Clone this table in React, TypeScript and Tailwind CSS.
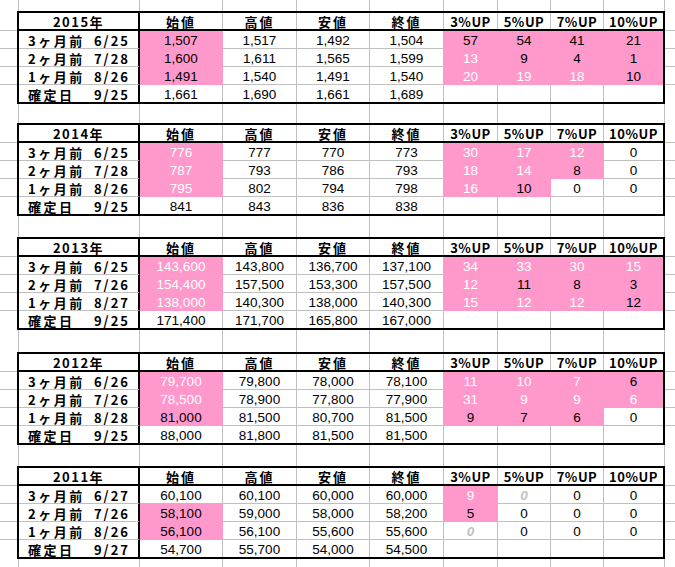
type Tone = '' | 'pb' | 'pw' | 'g' | 'x'
type Cell = { v: string; t: Tone }
type Row = { label: string; date: string; cells: Cell[] }
type Table = { year: string; rows: Row[] }

// "1,507:pb" => pink bg / black text, ":pw" pink bg / white text, ":g" grey italic zero, "-" empty
const parse = (s: string): Cell[] =>
  s.split(' ').map((p) => {
    if (p === '-') return { v: '', t: 'x' }
    const [v, t] = p.split(':')
    return { v, t: (t ?? '') as Tone }
  })

const tables: Table[] = [
  {
    year: '2015年',
    rows: [
      { label: '3ヶ月前', date: '6/25', cells: parse('1,507:pb 1,517 1,492 1,504 57:pb 54:pb 41:pb 21:pb') },
      { label: '2ヶ月前', date: '7/28', cells: parse('1,600:pb 1,611 1,565 1,599 13:pw 9:pb 4:pb 1:pb') },
      { label: '1ヶ月前', date: '8/26', cells: parse('1,491:pb 1,540 1,491 1,540 20:pw 19:pw 18:pw 10:pb') },
      { label: '確定日', date: '9/25', cells: parse('1,661 1,690 1,661 1,689 - - - -') },
    ],
  },
  {
    year: '2014年',
    rows: [
      { label: '3ヶ月前', date: '6/25', cells: parse('776:pw 777 770 773 30:pw 17:pw 12:pw 0') },
      { label: '2ヶ月前', date: '7/28', cells: parse('787:pw 793 786 793 18:pw 14:pw 8:pb 0') },
      { label: '1ヶ月前', date: '8/26', cells: parse('795:pw 802 794 798 16:pw 10:pb 0 0') },
      { label: '確定日', date: '9/25', cells: parse('841 843 836 838 - - - -') },
    ],
  },
  {
    year: '2013年',
    rows: [
      { label: '3ヶ月前', date: '6/25', cells: parse('143,600:pw 143,800 136,700 137,100 34:pw 33:pw 30:pw 15:pw') },
      { label: '2ヶ月前', date: '7/26', cells: parse('154,400:pw 157,500 153,300 157,500 12:pw 11:pb 8:pb 3:pb') },
      { label: '1ヶ月前', date: '8/27', cells: parse('138,000:pw 140,300 138,000 140,300 15:pw 12:pw 12:pw 12:pb') },
      { label: '確定日', date: '9/25', cells: parse('171,400 171,700 165,800 167,000 - - - -') },
    ],
  },
  {
    year: '2012年',
    rows: [
      { label: '3ヶ月前', date: '6/26', cells: parse('79,700:pw 79,800 78,000 78,100 11:pw 10:pw 7:pw 6:pb') },
      { label: '2ヶ月前', date: '7/26', cells: parse('78,500:pw 78,900 77,800 77,900 31:pw 9:pw 9:pw 6:pw') },
      { label: '1ヶ月前', date: '8/28', cells: parse('81,000:pb 81,500 80,700 81,500 9:pb 7:pb 6:pb 0') },
      { label: '確定日', date: '9/25', cells: parse('88,000 81,800 81,500 81,500 - - - -') },
    ],
  },
  {
    year: '2011年',
    rows: [
      { label: '3ヶ月前', date: '6/27', cells: parse('60,100 60,100 60,000 60,000 9:pw 0:g 0 0') },
      { label: '2ヶ月前', date: '7/26', cells: parse('58,100:pb 59,000 58,000 58,200 5:pb 0 0 0') },
      { label: '1ヶ月前', date: '8/26', cells: parse('56,100:pb 56,100 55,600 55,600 0:g 0 0 0') },
      { label: '確定日', date: '9/27', cells: parse('54,700 55,700 54,000 54,500 - - - -') },
    ],
  },
]

const HEADS = ['始値', '高値', '安値', '終値', '3%UP', '5%UP', '7%UP', '10%UP']
const COLS = ['w-[83px]', 'w-[74px]', 'w-[73px]', 'w-[74px]', 'w-[54px]', 'w-[53px]', 'w-[53px]', 'w-[59px]']
const ROW_H = ['h-[18px]', 'h-[18px]', 'h-[18px]', 'h-[17px]']
const GRID = ['w-[19px]', 'w-[121px]', 'w-[83px]', 'w-[74px]', 'w-[73px]', 'w-[74px]', 'w-[54px]', 'w-[53px]', 'w-[53px]', 'w-[61px]']
const GAPS = ['h-[19px]', 'h-[21px]', 'h-[22px]', 'h-[21px]']

const jp = 'font-["Noto_Sans_CJK_JP",sans-serif] font-bold leading-none text-black'
const num = 'font-["Liberation_Sans",Arial,sans-serif] text-[13.5px] leading-none'

const isPink = (c?: Cell) => !!c && (c.t === 'pb' || c.t === 'pw')

const Spacer = ({ h }: { h: string }) => (
  <div className={`flex ${h}`}>
    {GRID.map((w, i) => (
      <div key={i} className={`${w} shrink-0 border-r border-r-[#c0c0c0]`} />
    ))}
  </div>
)

const Margin = ({ w }: { w: string }) => (
  <div className={`${w} shrink-0 flex flex-col`}>
    <div className="h-[20px] border-b border-b-[#c0c0c0]" />
    <div className="h-[18px] border-b border-b-[#c0c0c0]" />
    <div className="h-[18px] border-b border-b-[#c0c0c0]" />
    <div className="h-[18px] border-b border-b-[#c0c0c0]" />
    <div className="flex-1" />
  </div>
)

const SheetTable = ({ table }: { table: Table }) => (
  <div className="flex h-[93px]">
    <Margin w="w-[17px]" />
    <div className="w-[648px] shrink-0 border-2 border-black flex flex-col">
      {/* header */}
      <div className="flex h-[18px] border-b-2 border-b-black">
        <div className={`w-[121px] shrink-0 border-r-2 border-r-black flex items-center justify-center text-[13px] tracking-[1.5px] ${jp}`}>
          {table.year}
        </div>
        {HEADS.map((h, i) => (
          <div
            key={h}
            className={`${COLS[i]} shrink-0 flex items-center justify-center ${i < 4 ? 'text-[13px] tracking-[2px]' : 'text-[13px] tracking-[0.5px]'} ${jp} ${
              i < 7 ? 'border-r border-r-[#c0c0c0]' : ''
            }`}
          >
            {h}
          </div>
        ))}
      </div>
      {/* rows */}
      {table.rows.map((row, r) => {
        const lastRow = r === table.rows.length - 1
        const below = table.rows[r + 1]
        return (
          <div key={row.label} className={`flex ${ROW_H[r]}`}>
            <div
              className={`w-[121px] shrink-0 border-r-2 border-r-black flex items-center justify-between pl-[9px] pr-[8px] pt-[1px] text-[13px] tracking-[2.5px] ${jp} ${
                lastRow ? '' : 'border-b border-b-[#c0c0c0]'
              }`}
            >
              <span>{row.label}</span>
              <span className="tracking-[2px]">{row.date}</span>
            </div>
            {row.cells.map((cell, i) => {
              const pink = isPink(cell)
              const pinkR = pink || isPink(row.cells[i + 1])
              const pinkB = pink || isPink(below?.cells[i])
              const text =
                cell.t === 'pw' ? 'text-white' : cell.t === 'g' ? 'text-[#c0c0c0] italic font-bold' : 'text-black'
              return (
                <div
                  key={i}
                  className={`${COLS[i]} shrink-0 flex items-center justify-center pt-[2px] ${num} ${text} ${
                    pink ? 'bg-[#ff99cc]' : ''
                  } ${i < 7 ? (pinkR ? 'border-r border-r-[#ff99cc]' : 'border-r border-r-[#c0c0c0]') : ''} ${
                    lastRow ? '' : pinkB ? 'border-b border-b-[#ff99cc]' : 'border-b border-b-[#c0c0c0]'
                  }`}
                >
                  {cell.v}
                </div>
              )
            })}
          </div>
        )
      })}
    </div>
    <Margin w="w-[10px]" />
  </div>
)

export default function App() {
  return (
    <div className="w-[675px] h-[567px] bg-white overflow-hidden flex flex-col">
      <Spacer h="h-[11px]" />
      {tables.map((t, i) => (
        <div key={t.year} className="flex flex-col">
          <SheetTable table={t} />
          {i < tables.length - 1 && <Spacer h={GAPS[i]} />}
        </div>
      ))}
      <div className="flex-1 flex">
        {GRID.map((w, i) => (
          <div key={i} className={`${w} shrink-0 border-r border-r-[#c0c0c0]`} />
        ))}
      </div>
    </div>
  )
}
